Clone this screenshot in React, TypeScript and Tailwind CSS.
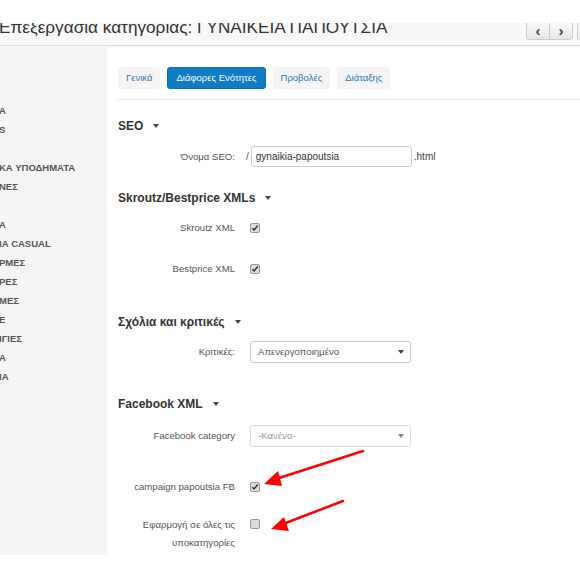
import { ReactNode } from 'react';

const sidebarItems = [
  'Α',
  'S',
  '',
  'ΚΑ ΥΠΟΔΗΜΑΤΑ',
  'ΝΕΣ',
  '',
  'Α',
  'ΙΑ CASUAL',
  'ΡΜΕΣ',
  'ΡΕΣ',
  'ΜΕΣ',
  'Ε',
  'ΙΓΙΕΣ',
  'Α',
  'ΙΑ',
];

const tabs = [
  { label: 'Γενικά', active: false },
  { label: 'Διάφορες Ενότητες', active: true },
  { label: 'Προβολές', active: false },
  { label: 'Διάταξης', active: false },
];

const Caret = ({ className = '' }: { className?: string }) => (
  <span
    className={`inline-block h-0 w-0 border-x-[3.5px] border-t-[4px] border-x-transparent border-t-[#444] ${className}`}
  />
);

const SectionTitle = ({ title, className = '' }: { title: string; className?: string }) => (
  <div className={`flex h-[18px] items-center text-[12px] font-bold text-[#333] ${className}`}>
    {title}
    <Caret className="ml-[10px]" />
  </div>
);

const Row = ({
  label,
  children,
  className = '',
}: {
  label: ReactNode;
  children: ReactNode;
  className?: string;
}) => (
  <div className={`flex items-center ${className}`}>
    <div className="w-[118px] text-right text-[9.6px] leading-[18px] text-[#555]">{label}</div>
    <div className="ml-[11px] flex items-center">{children}</div>
  </div>
);

const Checkbox = ({ checked }: { checked?: boolean }) => (
  <span className="ml-[4px] flex h-[10px] w-[10px] items-center justify-center rounded-[2px] border border-[#999] bg-[#dcdcdc]">
    {checked && (
      <svg width="8" height="8" viewBox="0 0 8 8">
        <path d="M1.3 4.2 L3.1 6 L6.8 1.6" fill="none" stroke="#333" strokeWidth="1.5" />
      </svg>
    )}
  </span>
);

const Select = ({ value, muted }: { value: string; muted?: boolean }) => (
  <div
    className={`ml-[4px] flex h-[22px] w-[161px] items-center justify-between rounded-[3px] border bg-white pr-[6px] pl-[7px] text-[9.6px] ${
      muted ? 'border-[#ddd] text-[#999]' : 'border-[#ccc] text-[#555]'
    }`}
  >
    {value}
    <Caret className={muted ? 'border-t-[#888]' : 'border-t-[#444]'} />
  </div>
);

export default function App() {
  return (
    <div className="relative h-[580px] w-[580px] overflow-hidden bg-white font-['Liberation_Sans',Arial,sans-serif]">
      <div className="h-[23px]" />

      <header className="flex h-[23px] justify-between overflow-hidden border-b border-[#dcdcdc] bg-[#f8f8f8] shadow-[0_1px_2px_rgba(0,0,0,0.08)]">
        <h1 className="-mt-[5px] -ml-[1px] text-[17.2px] leading-[18px] whitespace-nowrap text-[#333]">
          Επεξεργασία κατηγορίας: ΓΥΝΑΙΚΕΙΑ ΠΑΠΟΥΤΣΙΑ
        </h1>
        <div className="-mt-[5px] mr-[-17px] flex h-[22px]">
          <div className="flex h-[22px] w-[24px] items-center justify-center rounded-bl-[3px] border border-[#ccc] bg-gradient-to-b from-white to-[#e6e6e6] pt-[4px] text-[15px] font-bold text-[#444]">
            ‹
          </div>
          <div className="-ml-px flex h-[22px] w-[24px] items-center justify-center rounded-br-[3px] border border-[#ccc] bg-gradient-to-b from-white to-[#e6e6e6] pt-[4px] text-[15px] font-bold text-[#444]">
            ›
          </div>
          <div className="ml-[4px] h-[22px] w-[20px] rounded-bl-[3px] border border-[#ccc] bg-gradient-to-b from-white to-[#e6e6e6]" />
        </div>
      </header>

      <div className="flex h-[509px]">
        <aside className="w-[107px] overflow-hidden bg-[#f5f5f5] pt-[55px]">
          {sidebarItems.map((item, i) => (
            <div
              key={i}
              className="-ml-[1px] h-[19px] text-[9.5px] leading-[19px] font-bold whitespace-nowrap text-[#555]"
            >
              {item}
            </div>
          ))}
        </aside>

        <main className="flex-1 pt-[21px] pl-[10px]">
          <div className="ml-[1px] flex gap-[7px]">
            {tabs.map((tab) => (
              <div
                key={tab.label}
                className={`flex h-[22px] items-center rounded-[3px] px-[8px] text-[9.5px] ${
                  tab.active
                    ? 'border border-[#0b70b5] bg-[#0f7cc6] text-white'
                    : 'bg-[#f4f4f4] text-[#3178b8]'
                }`}
              >
                {tab.label}
              </div>
            ))}
          </div>

          <div className="mt-[10px] h-px bg-[#e6e6e6]" />

          <SectionTitle title="SEO" className="mt-[17px] ml-[1px]" />

          <Row label="Όνομα SEO:" className="mt-[11px] h-[21px]">
            <span className="text-[10px] text-[#555]">/</span>
            <div className="ml-[2px] flex h-[21px] w-[161px] items-center rounded-[3px] border border-[#ccc] pl-[4px] text-[10px] text-[#333]">
              gynaikia-papoutsia
            </div>
            <span className="ml-[2px] text-[10px] text-[#444]">.html</span>
          </Row>

          <SectionTitle title="Skroutz/Bestprice XMLs" className="mt-[22px] ml-[1px]" />

          <Row label="Skroutz XML" className="mt-[11px] h-[20px]">
            <Checkbox checked />
          </Row>

          <Row label="Bestprice XML" className="mt-[21px] h-[20px]">
            <Checkbox checked />
          </Row>

          <SectionTitle title="Σχόλια και κριτικές" className="mt-[34px] ml-[1px]" />

          <Row label="Κριτικές:" className="mt-[10px] h-[22px]">
            <Select value="Απενεργοποιημένο" />
          </Row>

          <SectionTitle title="Facebook XML" className="mt-[32px] ml-[1px]" />

          <Row label="Facebook category" className="mt-[12px] h-[22px]">
            <Select value="-Κανένα-" muted />
          </Row>

          <Row label="campaign papoutsia FB" className="mt-[30px] h-[20px]">
            <Checkbox checked />
          </Row>

          <div className="mt-[19px] flex items-start">
            <div className="w-[118px] text-right text-[9.6px] leading-[18px] text-[#555]">
              Εφαρμογή σε όλες τις υποκατηγορίες
            </div>
            <div className="mt-[3px] ml-[11px]">
              <Checkbox />
            </div>
          </div>
        </main>
      </div>

      <svg className="pointer-events-none absolute top-0 left-0" width="580" height="580">
        <line x1="363" y1="451" x2="276" y2="479" stroke="#f00" strokeWidth="2.5" strokeLinecap="round" />
        <polygon points="264,484 278,471 282,486" fill="#f00" />
        <line x1="343" y1="501" x2="283" y2="524" stroke="#f00" strokeWidth="2.5" strokeLinecap="round" />
        <polygon points="271,529 284,517 289,531" fill="#f00" />
      </svg>
    </div>
  );
}
